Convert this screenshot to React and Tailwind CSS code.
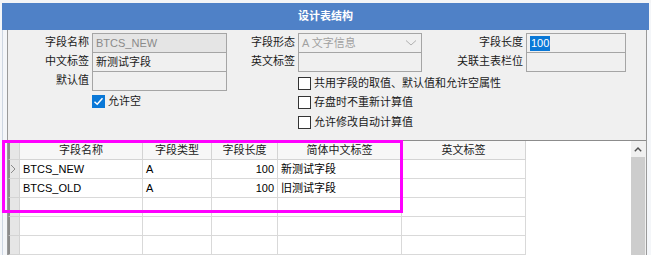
import React from 'react';

// 表格列定义
const columns = [
  { key: 'name', title: '字段名称', width: 'w-[123px]' },
  { key: 'type', title: '字段类型', width: 'w-[69px]' },
  { key: 'len', title: '字段长度', width: 'w-[66px]', right: true },
  { key: 'cn', title: '简体中文标签', width: 'w-[124px]' },
  { key: 'en', title: '英文标签', width: 'w-[124px]' },
];

const rows = [
  { name: 'BTCS_NEW', type: 'A', len: '100', cn: '新测试字段', en: '', current: true },
  { name: 'BTCS_OLD', type: 'A', len: '100', cn: '旧测试字段', en: '' },
  {}, {}, {},
];

const Label = ({ children }) => (
  <div className="flex items-center justify-end pr-[3px] text-[#1a1a1a] whitespace-nowrap">{children}</div>
);

const Box = ({ children, className = '' }) => (
  <div className={`h-[20px] border border-[#a5a5a5] flex items-center px-[3px] whitespace-nowrap ${className}`}>
    {children}
  </div>
);

const CheckBox = ({ checked, label }) => (
  <div className="flex items-center gap-[3px] whitespace-nowrap">
    {checked ? (
      <span className="w-[13px] h-[13px] bg-[#0a78d7] flex items-center justify-center">
        <svg width="11" height="11" viewBox="0 0 11 11">
          <path d="M1.5 5.8 L4.2 8.3 L9.5 2.3" fill="none" stroke="white" strokeWidth="1.5" />
        </svg>
      </span>
    ) : (
      <span className="w-[13px] h-[13px] border border-[#333] bg-white" />
    )}
    <span className="text-[#1a1a1a]">{label}</span>
  </div>
);

export default function App() {
  return (
    <div className="w-[651px] h-[255px] overflow-hidden relative bg-[#f4f6f9] font-['Liberation_Sans','Noto_Sans_CJK_SC',sans-serif] text-[11px] leading-none">
      <div className="h-[3px] bg-[#f3f4f6]" />
      <div className="mx-[2px] h-[27px] bg-[#4f81c7] flex items-center justify-center text-white font-bold text-[11px]">
        设计表结构
      </div>

      <div className="flex h-[225px]">
        <div className="w-[7px] pl-[2px]">
          <div className="h-full border-l border-[#cdd6e2]" />
        </div>

        <div className="w-[640px] bg-[#f0f0f0] border-x border-[#9a9a9a] flex flex-col">
          {/* 表单区 */}
          <div className="h-[113px] pt-[3px] grid grid-cols-[84px_135px_71px_124px_104px_100px] grid-rows-[19px_19px_19px_19px_20px]">
            <Label>字段名称</Label>
            <Box className="bg-[#e5e5e5] text-[#8a8a8a]">BTCS_NEW</Box>
            <Label>字段形态</Label>
            <Box className="bg-[#f0f0f0] text-[#a0a0a0] justify-between">
              <span>A 文字信息</span>
              <svg width="12" height="8" viewBox="0 0 12 8" className="mr-[1px]">
                <path d="M1 1.5 L6 6 L11 1.5" fill="none" stroke="#b0b0b0" strokeWidth="1" />
              </svg>
            </Box>
            <Label>字段长度</Label>
            <Box className="bg-[#f0f0f0] px-[1px]">
              <span className="bg-[#0a78d7] text-white px-[1px] py-[2px]">100</span>
            </Box>

            <Label>中文标签</Label>
            <Box className="bg-[#f0f0f0] text-[#1a1a1a]">新测试字段</Box>
            <Label>英文标签</Label>
            <Box className="bg-[#f0f0f0]" />
            <Label>关联主表栏位</Label>
            <Box className="bg-[#f0f0f0]" />

            <Label>默认值</Label>
            <Box className="bg-[#f0f0f0] h-[18px]" />
            <div />
            <div className="col-span-3 flex items-end">
              <CheckBox label="共用字段的取值、默认值和允许空属性" />
            </div>

            <div />
            <div className="flex items-end pb-[1px]">
              <CheckBox checked label="允许空" />
            </div>
            <div />
            <div className="col-span-3 flex items-end">
              <CheckBox label="存盘时不重新计算值" />
            </div>

            <div className="col-start-4 col-span-3 flex items-end">
              <CheckBox label="允许修改自动计算值" />
            </div>
          </div>

          {/* 表格区 */}
          <div className="flex-1 flex border-t border-[#8c8c8c] bg-white">
            <div className="flex-1 flex flex-col">
              <div className="flex h-[19px]">
                <div className="w-[12px] bg-[#e6e6e6] border-l-2 border-[#8c8c8c] border-r border-r-[#d4d4d4] border-b border-b-[#d4d4d4]" />
                {columns.map((c) => (
                  <div
                    key={c.key}
                    className={`${c.width} border-r border-b border-[#d4d4d4] bg-[#f7f7f7] flex items-center justify-center text-[#222]`}
                  >
                    {c.title}
                  </div>
                ))}
                <div className="flex-1" />
              </div>
              {rows.map((r, i) => (
                <div key={i} className="flex h-[19px]">
                  <div className="w-[12px] bg-[#e6e6e6] border-l-2 border-[#8c8c8c] border-r border-r-[#d4d4d4] border-b border-b-[#d4d4d4] flex items-center">
                    {r.current && (
                      <svg width="6" height="10" viewBox="0 0 6 10">
                        <path d="M1 1 L5 5 L1 9" fill="none" stroke="#8a8a8a" strokeWidth="1" />
                      </svg>
                    )}
                  </div>
                  {columns.map((c) => (
                    <div
                      key={c.key}
                      className={`${c.width} border-r border-b border-[#d9d9d9] flex items-center px-[3px] text-black ${c.right ? 'justify-end' : ''}`}
                    >
                      {r[c.key]}
                    </div>
                  ))}
                  <div className="flex-1" />
                </div>
              ))}
            </div>
            <div className="w-[14px] flex flex-col bg-[#cdcdcd]">
              <div className="h-[16px] bg-[#f0f0f0] flex items-center justify-center">
                <svg width="8" height="5" viewBox="0 0 8 5">
                  <path d="M0.8 4.2 L4 1 L7.2 4.2" fill="none" stroke="#505050" strokeWidth="1.4" />
                </svg>
              </div>
            </div>
            <div className="w-[1px] bg-[#f0f0f0]" />
          </div>
        </div>

        <div className="flex-1 bg-[#f4f6f9]" />
      </div>

      {/* 标注框 */}
      <div className="absolute left-[2px] top-[140px] w-[401px] h-[73px] border-[3px] border-[#f0f]" />
    </div>
  );
}
